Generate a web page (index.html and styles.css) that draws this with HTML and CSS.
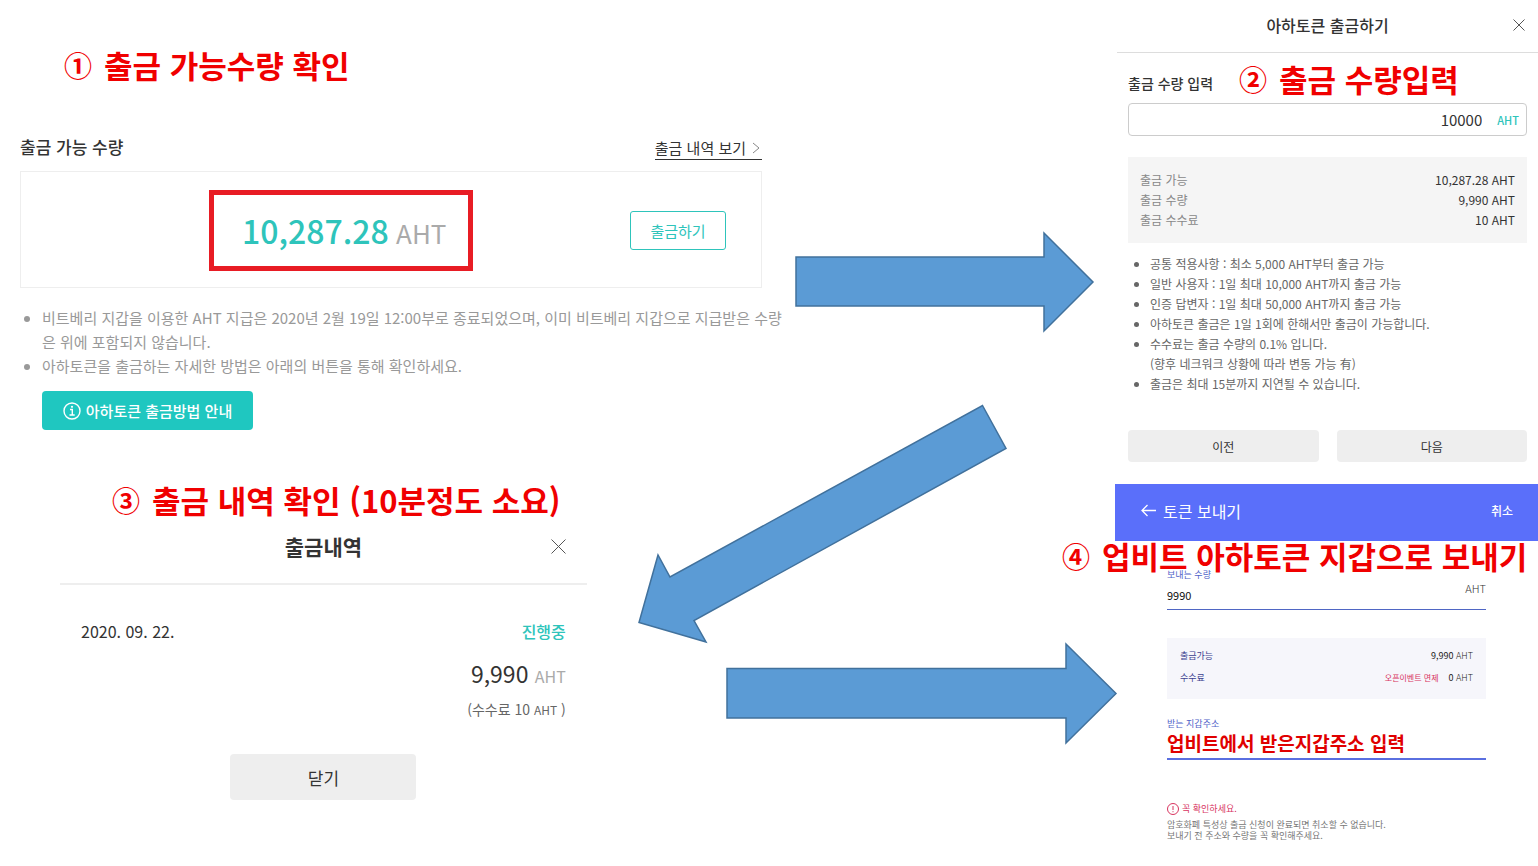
FILE: index.html
```html
<!DOCTYPE html>
<html lang="ko">
<head>
  <meta charset="UTF-8" />
  <meta name="viewport" content="width=device-width, initial-scale=1.0"/>
  <title>아하토큰 출금방법</title>
  <link rel="stylesheet" href="styles.css">
</head>
<body>
  <main class="guide">
    <div class="left">
      <!-- 1. 출금 가능 수량 -->
      <h2 class="step step-1"><span>①</span> 출금 가능수량 확인</h2>
      <section class="balance">
        <div class="balance-head">
          <h3>출금 가능 수량</h3>
          <a class="history-link" href="#history">출금 내역 보기
            <svg width="8" height="12" viewBox="0 0 8 12"><path d="M1 1l6 5-6 5"/></svg>
          </a>
        </div>
        <div class="balance-card">
          <p class="amount-box"><span class="amount">10,287.28</span> <span class="unit">AHT</span></p>
          <button class="btn-outline" type="button">출금하기</button>
        </div>
        <ul class="notes">
          <li>비트베리 지갑을 이용한 AHT 지급은 2020년 2월 19일 12:00부로 종료되었으며, 이미 비트베리 지갑으로 지급받은 수량<br>은 위에 포함되지 않습니다.</li>
          <li>아하토큰을 출금하는 자세한 방법은 아래의 버튼을 통해 확인하세요.</li>
        </ul>
        <button class="btn-guide" type="button">
          <svg width="18" height="18" viewBox="0 0 18 18"><circle cx="9" cy="9" r="8"/><path d="M7 7.500h2.300v5.500M6.500 13h5.200"/><circle class="dot" cx="9" cy="4.800" r="1.100"/></svg>
          아하토큰 출금방법 안내
        </button>
      </section>

      <!-- 3. 출금 내역 -->
      <h2 class="step step-3"><span>③</span> 출금 내역 확인 (10분정도 소요)</h2>
      <section class="history" id="history">
        <header class="history-head">
          <h3>출금내역</h3>
          <button class="close" type="button" aria-label="닫기">
            <svg width="15" height="15" viewBox="0 0 15 15"><path d="M.500.500l14 14M14.500.500l-14 14"/></svg>
          </button>
        </header>
        <div class="history-body">
          <div class="history-row">
            <span>2020. 09. 22.</span>
            <strong>진행중</strong>
          </div>
          <p class="history-amount">9,990 <span>AHT</span></p>
          <p class="history-fee">(수수료 10 <small>AHT</small> )</p>
        </div>
        <button class="btn-close" type="button">닫기</button>
      </section>
    </div>

    <div class="right">
      <!-- 2. 출금하기 -->
      <section class="withdraw">
        <header class="withdraw-head">
          <h3>아하토큰 출금하기</h3>
          <button class="close" type="button" aria-label="닫기">
            <svg width="12" height="12" viewBox="0 0 12 12"><path d="M.500.500l11 11M11.500.500l-11 11"/></svg>
          </button>
        </header>
        <form class="withdraw-body">
          <label for="quantity">출금 수량 입력</label>
          <div class="quantity">
            <input type="text" id="quantity" value="10000">
            <span>AHT</span>
          </div>
          <dl class="summary">
            <div><dt>출금 가능</dt><dd>10,287.28 AHT</dd></div>
            <div><dt>출금 수량</dt><dd>9,990 AHT</dd></div>
            <div><dt>출금 수수료</dt><dd>10 AHT</dd></div>
          </dl>
          <ul class="rules">
            <li>공통 적용사항 : 최소 5,000 AHT부터 출금 가능</li>
            <li>일반 사용자 : 1일 최대 10,000 AHT까지 출금 가능</li>
            <li>인증 답변자 : 1일 최대 50,000 AHT까지 출금 가능</li>
            <li>아하토큰 출금은 1일 1회에 한해서만 출금이 가능합니다.</li>
            <li>수수료는 출금 수량의 0.1% 입니다.<br>(향후 네크워크 상황에 따라 변동 가능 有)</li>
            <li>출금은 최대 15분까지 지연될 수 있습니다.</li>
          </ul>
          <div class="actions">
            <button type="button">이전</button>
            <button type="button">다음</button>
          </div>
        </form>
        <h2 class="step step-2"><span>②</span> 출금 수량입력</h2>
      </section>

      <!-- 4. 토큰 보내기 -->
      <section class="send">
        <header class="send-head">
          <button class="back" type="button" aria-label="뒤로">
            <svg width="15" height="13" viewBox="0 0 15 13"><path d="M15 6.500H1M6.500 1L1 6.500 6.500 12"/></svg>
          </button>
          <h3>토큰 보내기</h3>
          <button class="cancel" type="button">취소</button>
        </header>
        <form class="send-body">
          <label for="sendAmount">보내는 수량</label>
          <div class="send-amount">
            <input type="text" id="sendAmount" value="9990">
            <span>AHT</span>
          </div>
          <dl class="send-info">
            <div><dt>출금가능</dt><dd>9,990 <span>AHT</span></dd></div>
            <div><dt>수수료</dt><dd><em>오픈이벤트 면제</em>0 <span>AHT</span></dd></div>
          </dl>
          <label for="address">받는 지갑주소</label>
          <input class="address" type="text" id="address" value="업비트에서 받은지갑주소 입력">
          <p class="warn">
            <svg width="12" height="12" viewBox="0 0 12 12"><circle cx="6" cy="6" r="5.500"/><path d="M6 3v4M6 8.200v1"/></svg>
            꼭 확인하세요.
          </p>
          <p class="warn-text">암호화폐 특성상 출금 신청이 완료되면 취소할 수 없습니다.<br>보내기 전 주소와 수량을 꼭 확인해주세요.</p>
        </form>
        <h2 class="step step-4"><span>④</span> 업비트 아하토큰 지갑으로 보내기</h2>
      </section>
    </div>

    <!-- 단계 화살표 -->
    <svg class="arrows" viewBox="0 0 1538 866" aria-hidden="true">
      <path d="M796 257H1044V233L1093 282 1044 331V306H796z"/>
      <path d="M982.500 405.500L1006 448.500 694 620.500 706 642 639 622.500 658 555 670 577z"/>
      <path d="M727 668.500H1066V644L1116 693.500 1066 743V718H727z"/>
    </svg>
  </main>
</body>
</html>
```

FILE: styles.css
```css
* {
  box-sizing: border-box;
}
body {
  margin: 0;
  font-family: "Noto Sans CJK KR", sans-serif;
  color: #333;
  background: #fff;
}
h2, h3, p, ul, dl, dd {
  margin: 0;
}
button, input {
  font-family: inherit;
  padding: 0;
  border: none;
  background: none;
}
button {
  cursor: pointer;
}
input {
  min-width: 0;
  outline: none;
}
svg {
  fill: none;
  flex: none;
}
.guide {
  position: relative;
  display: grid;
  grid-template-columns: minmax(0, 762fr) minmax(0, 353fr) minmax(0, 423fr);
}
.left {
  grid-column: 1;
  padding: 49px 0 24px 20px;
}
.right {
  grid-column: 3;
}
.arrows {
  position: absolute;
  top: 0;
  left: 0;
  width: 100%;
  fill: #5b9bd5;
  stroke: #41719c;
  stroke-width: 1.5;
  pointer-events: none;
}
.step {
  display: flex;
  align-items: center;
  gap: 12px;
  font-size: 31px;
  line-height: 32px;
  font-weight: 700;
  color: #f00000;
  white-space: nowrap;
}
.step span {
  font-size: 28px;
}

/* 1. 출금 가능 수량 */
.step-1 {
  margin-left: 44px;
}
.balance-head {
  display: flex;
  justify-content: space-between;
  align-items: flex-end;
  margin: 53px 0 11px;
}
.balance-head h3 {
  font-size: 17px;
  line-height: 26px;
  font-weight: 500;
}
.history-link {
  display: flex;
  align-items: center;
  gap: 6px;
  padding-right: 2px;
  font-size: 15px;
  line-height: 22px;
  color: #333;
  text-decoration: none;
  border-bottom: 1px solid #333;
}
.history-link svg {
  stroke: #888;
}
.balance-card {
  display: flex;
  align-items: center;
  justify-content: space-between;
  height: 117px;
  padding: 2px 35px 0 188px;
  border: 1px solid #eee;
}
.amount-box {
  padding: 16px 22px 14px 28px;
  font-size: 26px;
  line-height: 38px;
  white-space: nowrap;
  border: 5px solid #e81c24;
}
.amount {
  font-size: 32px;
  font-weight: 500;
  color: #2ec4bb;
}
.unit {
  color: #aaa;
}
.btn-outline {
  width: 96px;
  height: 39px;
  font-size: 15px;
  color: #2ec4bb;
  border: 1px solid #2ec4bb;
  border-radius: 3px;
}
.notes {
  margin: 18px 0 13px;
  padding-left: 22px;
  font-size: 15px;
  line-height: 24px;
  color: #999;
  white-space: nowrap;
}
.btn-guide {
  display: flex;
  align-items: center;
  justify-content: center;
  gap: 5px;
  width: 211px;
  height: 39px;
  margin-left: 22px;
  font-size: 15px;
  font-weight: 500;
  color: #fff;
  background: #1fc7c0;
  border-radius: 4px;
}
.btn-guide svg {
  stroke: #fff;
  stroke-width: 1.4;
}
.btn-guide .dot {
  fill: #fff;
  stroke: none;
}

/* 3. 출금 내역 */
.step-3 {
  margin: 54px 0 14px 92px;
}
.history {
  width: 71%;
  margin-left: 40px;
}
.history-head {
  display: grid;
  grid-template-columns: 1fr auto 1fr;
  align-items: center;
  padding: 0 21px 21px;
  border-bottom: 2px solid #eee;
}
.history-head h3 {
  grid-column: 2;
  font-size: 21px;
  line-height: 32px;
  font-weight: 700;
}
.close {
  display: flex;
  justify-self: end;
}
.close svg {
  stroke: #555;
}
.history-body {
  padding: 34px 21px 32px;
  text-align: right;
}
.history-row {
  display: flex;
  justify-content: space-between;
  font-size: 16px;
  line-height: 24px;
}
.history-row strong {
  font-weight: 500;
  color: #2ec4bb;
}
.history-amount {
  margin: 12px 0 3px;
  font-size: 23px;
  line-height: 36px;
}
.history-amount span {
  font-size: 16px;
  color: #aaa;
}
.history-fee {
  font-size: 14px;
  line-height: 24px;
  color: #666;
}
.history-fee small {
  font-size: 12px;
}
.btn-close {
  display: block;
  width: 186px;
  height: 46px;
  margin: 0 auto;
  font-size: 17px;
  color: #333;
  background: #eee;
  border-radius: 4px;
}

/* 2. 출금하기 */
.withdraw {
  position: relative;
  margin-left: 2px;
}
.withdraw-head {
  display: grid;
  grid-template-columns: 1fr auto 1fr;
  align-items: center;
  height: 53px;
  padding: 0 13px 3px;
  border-bottom: 1px solid #ddd;
}
.withdraw-head h3 {
  grid-column: 2;
  font-size: 16px;
  line-height: 24px;
  font-weight: 500;
}
.withdraw-body {
  padding: 20px 11px 0;
}
.withdraw-body label {
  display: block;
  font-size: 14px;
  line-height: 20px;
  font-weight: 500;
}
.quantity {
  display: flex;
  align-items: center;
  gap: 15px;
  height: 33px;
  margin-top: 10px;
  padding: 0 7px;
  border: 1px solid #ccc;
  border-radius: 4px;
}
.quantity input {
  flex: 1;
  font-size: 15px;
  text-align: right;
  color: #333;
}
.quantity span {
  font-size: 11px;
  font-weight: 500;
  color: #2ec4bb;
}
.summary {
  margin-top: 21px;
  padding: 13px 12px;
  font-size: 12px;
  line-height: 20px;
  background: #f5f5f5;
}
.summary div, .send-info div {
  display: flex;
  justify-content: space-between;
}
.summary dt {
  color: #888;
}
.rules {
  margin: 11px 0 36px;
  padding-left: 22px;
  font-size: 12px;
  line-height: 20px;
  color: #666;
}
.actions {
  display: flex;
  gap: 18px;
}
.actions button {
  flex: 1;
  height: 32px;
  font-size: 12px;
  color: #333;
  background: #eee;
  border-radius: 4px;
}
.step-2 {
  position: absolute;
  top: 63px;
  left: 122px;
}

/* 4. 토큰 보내기 */
.send {
  position: relative;
  margin-top: 22px;
}
.send-head {
  display: flex;
  align-items: center;
  gap: 7px;
  height: 57px;
  padding: 0 25px 4px 26px;
  color: #fff;
  background: #5a6ffa;
}
.send-head h3 {
  font-size: 16px;
  line-height: 24px;
  font-weight: 400;
}
.back {
  display: flex;
}
.back svg {
  stroke: #fff;
  stroke-width: 1.3;
}
.cancel {
  margin-left: auto;
  font-size: 12px;
  font-weight: 500;
  color: #fff;
}
.send-body {
  padding: 28px 52px 24px;
  font-size: 9px;
}
.send-body label {
  display: block;
  line-height: 12px;
  color: #5061c8;
}
.send-amount {
  display: flex;
  align-items: flex-start;
  border-bottom: 1px solid #4f66c4;
}
.send-amount input {
  flex: 1;
  height: 28px;
  font-size: 11px;
  color: #111;
}
.send-amount span {
  font-size: 11px;
  line-height: 14px;
  font-weight: 300;
}
.send-info {
  margin: 28px 0 19px;
  padding: 7px 13px 10px;
  line-height: 22px;
  background: #f6f6fb;
}
.send-info dt {
  color: #3c3f90;
}
.send-info dd {
  color: #222;
}
.send-info span {
  font-weight: 300;
}
.send-info em {
  margin-right: 10px;
  font-size: 8px;
  font-style: normal;
  color: #d8345f;
}
.address {
  display: block;
  width: 100%;
  height: 30px;
  padding-bottom: 4px;
  font-size: 19px;
  font-weight: 700;
  color: #e00000;
  border-bottom: 2px solid #5a6fe0;
}
.warn {
  display: flex;
  align-items: center;
  gap: 3px;
  margin: 42px 0 3px;
  line-height: 14px;
  color: #d8345f;
}
.warn svg {
  stroke: #d8345f;
}
.warn-text {
  line-height: 11px;
  color: #777;
}
.step-4 {
  position: absolute;
  top: 56px;
  left: -53px;
}
```
